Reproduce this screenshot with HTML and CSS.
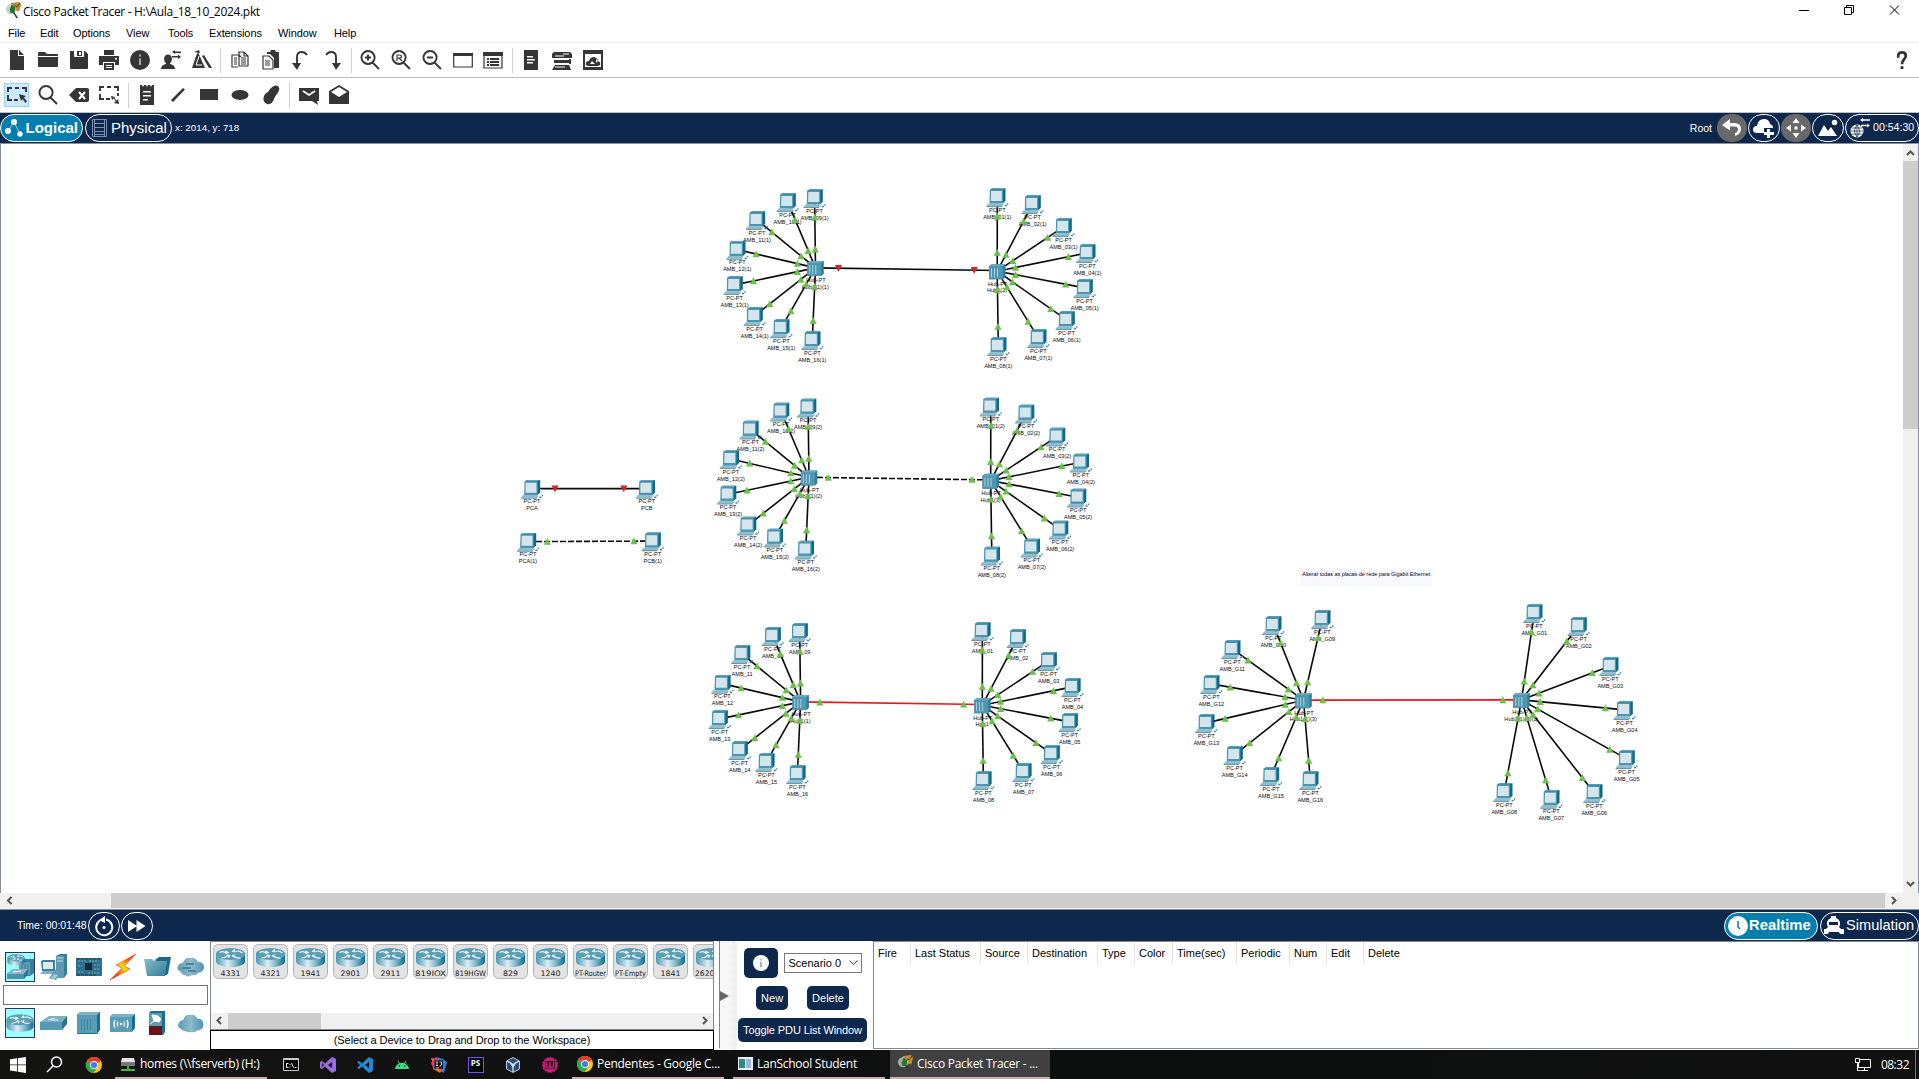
FILE: index.html
```html
<!DOCTYPE html>
<html lang="en">
<head>
<meta charset="utf-8">
<title>Cisco Packet Tracer</title>
<link rel="stylesheet" href="styles.css">
</head>
<body>
<svg class="defs" width="0" height="0">
  <defs>
    <linearGradient id="steel" x1="0" x2="1" y1="0" y2="0"><stop offset="0" stop-color="#4a97b1"/><stop offset=".4" stop-color="#dcecf2"/><stop offset=".6" stop-color="#9cc8d6"/><stop offset="1" stop-color="#0c6f8e"/></linearGradient>
    <linearGradient id="bolt" x1="0" x2="1" y1="1" y2="0"><stop offset="0" stop-color="#e8140c"/><stop offset=".25" stop-color="#f04a10"/><stop offset=".5" stop-color="#ffe000"/><stop offset=".75" stop-color="#f04a10"/><stop offset="1" stop-color="#e8140c"/></linearGradient>
    <linearGradient id="teal" x1="0" x2="1" y1="0" y2="1"><stop offset="0" stop-color="#8dbccd"/><stop offset="1" stop-color="#2d7c99"/></linearGradient>
    <linearGradient id="mist" x1="0" x2="1" y1="0" y2="0"><stop offset="0" stop-color="#5a9cb6"/><stop offset=".5" stop-color="#8fbccd"/><stop offset="1" stop-color="#4d94b0"/></linearGradient>
    <symbol id="router" viewBox="0 0 30 20">
      <path d="M.5 6.500v7c0 8 29 8 29 0v-7z" fill="url(#steel)"/>
      <ellipse cx="15" cy="6.500" rx="14.600" ry="6" fill="#5a9fb6"/>
      <path d="M4 5q4-2 7 1M27 5.500q-4-3-7-1.500M6 10.500q4 0 7-3M17 8q3 3 8 2.500" fill="none" stroke="#eef6f9" stroke-width="1.200"/>
      <path d="M10 3l4 2-4 2zM16 4l3-2.500 1 3.500zM13 11l-1-4 3 1zM20 7l-4 .500 2 2.500z" fill="#eef6f9"/>
    </symbol>
    <symbol id="chrome" viewBox="0 0 16 16">
      <circle cx="8" cy="8" r="8" fill="#fbc116"/>
      <path d="M8 8L1.070 4A8 8 0 0 1 14.930 4z" fill="#e33b2e"/><path d="M8 8L1.070 4A8 8 0 0 0 7.500 16L11.500 10z" fill="#2da94f"/>
      <circle cx="8" cy="8" r="3.900" fill="#fff"/><circle cx="8" cy="8" r="3.100" fill="#3b7ded"/>
    </symbol>
    <symbol id="tracer" viewBox="0 0 18 18">
      <path d="M6 1l9-1 2 3-2 7-8-2z" fill="#c98a2a"/><path d="M8 3l5 2 3-4" fill="none" stroke="#3b2a10"/>
      <circle cx="6.500" cy="7.500" r="5.500" fill="#b9c6c2" opacity=".8"/><path d="M7 3l4 2-1 6-4 1-1-4z" fill="#1c7a22"/><path d="M9 11l4 6" stroke="#333" stroke-width="1.600"/>
    </symbol>
  </defs>
</svg>

<header class="titlebar">
  <svg class="app-icon" width="17" height="17"><use href="#tracer"/></svg>
  <span class="title">Cisco Packet Tracer - H:\Aula_18_10_2024.pkt</span>
  <svg class="caption" width="110" height="12" viewBox="0 0 110 12" fill="none" stroke="#000"><path d="M1 6.500h10M46.500 3.500h7v7h-7zM48.500 3v-1.500h7v7h-1.500M92 1.500l9 9m0-9l-9 9"/></svg>
</header>

<nav class="menu">
  <span>File</span><span>Edit</span><span>Options</span><span>View</span><span>Tools</span><span>Extensions</span><span>Window</span><span>Help</span>
</nav>

<div class="toolbar top">
  <i><svg viewBox="0 0 20 20"><path d="M3 0h8v6h6v14H3zM12 0l5 5h-5z"/></svg></i>
  <i><svg viewBox="0 0 20 20"><path d="M0 3q0-1 1-1h6l2 2h10q1 0 1 1v1H0zM0 7h20v9q0 1-1 1H1q-1 0-1-1z"/></svg></i>
  <i><svg viewBox="0 0 20 20"><path fill-rule="evenodd" d="M1 1h4v6h10V1h1l3 3v14q0 1-1 1H2q-1 0-1-1zM8 1h5v5H8zm2 1v3h2V2z"/></svg></i>
  <i><svg viewBox="0 0 20 20"><path fill-rule="evenodd" d="M5 0h10v5H5zM0 6h20v9h-4v-3H4v3H0zM5 13h10v7H5zm2 2v1h6v-1zm0 2v1h6v-1zM16 8v1.500h2V8z"/></svg></i>
  <i><svg viewBox="0 0 20 20"><circle cx="10" cy="10" r="10"/><path d="M10 4.500v2M10 8.500V15" stroke="#aaa" stroke-width="2"/></svg></i>
  <i><svg viewBox="0 0 20 20"><ellipse cx="7" cy="9" rx="4" ry="4.500"/><path d="M0 19q0-4 5-5v-3h4v3q5 1 5 5zM11 2l3-2v1.500h6v1.500h-6V4zM20 7l-3-2.500V6h-6v1.500h6V9z"/></svg></i>
  <i><svg viewBox="0 0 20 20"><path d="M6 2l7 16H0L4 6zM10 6l2-1 8 13h-3zM2 2l5-2 1 3z"/><path d="M7 6l-3 9h6" fill="none" stroke="#fff"/></svg></i>
  <b></b>
  <i><svg viewBox="0 0 20 20" class="line"><path d="M8 17H2V5h7l2 2M8 2h6l4 4v10H9V2M14 2v4h4M4 8h3M4 10h3M4 12h3M4 14h3M11 8h5M11 10h5M11 12h5M11 14h5"/></svg></i>
  <i><svg viewBox="0 0 20 20"><path d="M6 2h3l1-2h4l1 2h3v16h-5V8L9 4H6z"/><path class="line" d="M2 6h6l4 4v9H2zM4 11h5M4 13h5M4 15h5"/></svg></i>
  <i><svg viewBox="0 0 20 20"><path class="line w2" d="M6 15V7Q6 2 11 2q3 0 5 3"/><path d="M1 13l5 7 4-7z"/></svg></i>
  <i><svg viewBox="0 0 20 20"><path class="line w2" d="M4 5q2-3 5-3 5 0 5 5v8"/><path d="M10 13l4 7 5-7z"/></svg></i>
  <b></b>
  <i><svg viewBox="0 0 20 20"><path class="line w2" d="M12 12l7 7M8 1a6.500 6.500 0 1 0 .1 0M5 7.500h6M8 4.500v6"/></svg></i>
  <i><svg viewBox="0 0 20 20"><path class="line w2" d="M12 12l7 7M8 1a6.500 6.500 0 1 0 .1 0"/><path class="line" stroke-width="1.500" d="M6 11V5h2q2.500 0 2.500 1.500T8 8H6m2 0l3 3"/></svg></i>
  <i><svg viewBox="0 0 20 20"><path class="line w2" d="M12 12l7 7M8 1a6.500 6.500 0 1 0 .1 0M5 7.500h6"/></svg></i>
  <i><svg viewBox="0 0 20 20"><path class="line" d="M.7 4h18.600v13H.7z"/><path d="M0 3h20v3H0z"/></svg></i>
  <i><svg viewBox="0 0 20 20"><path class="line" d="M1 3h18v15H1z"/><path d="M0 2h20v4H0zM4 8h2v2H4zM7 8h9v2H7zM4 11h2v2H4zM7 11h9v2H7zM4 14h2v2H4zM7 14h9v2H7z"/></svg></i>
  <b></b>
  <i><svg viewBox="0 0 20 20"><path fill-rule="evenodd" d="M3 0h14v20H3zM6 6v1.500h6V6zm0 3v1.500h8V9zm0 3v1.500h6V12z"/></svg></i>
  <i><svg viewBox="0 0 20 20"><path d="M2 2h16l2 2v4H0V4zM2 10h15v3H2zM3 15h14l2 5H0zM17 9h2v5h-2z"/><path d="M3 6h9M3 17h10M11 4h6" stroke="#fff"/></svg></i>
  <i><svg viewBox="0 0 20 20"><path fill-rule="evenodd" d="M0 0h20v20H0zM2 4v13h16V4z"/><path fill-rule="evenodd" d="M6 16q-4 0-3-3 0-2 3-2 1-4 5-4 4 1 4 4 3 1 2 4l-2 1zM7 14h5l-3-3zm6-5v4l2-2z"/></svg></i>
  <svg class="help" viewBox="0 0 12 20"><path d="M2 7V5q0-3.500 4-3.500T10 5q0 2-2 4t-2 5" fill="none" stroke="#333" stroke-width="2.800"/><path d="M4.500 16h3v3h-3z"/></svg>
</div>

<div class="toolbar">
  <i class="on"><svg viewBox="0 0 20 20"><path class="line w2" d="M1 7V3h4M8 3h4M15 3h4v4M1 10v5h4M7 15h4"/><path d="M12 9l7 2-2 1.500 3 4-1.500 1.500-3-4-1.500 2z"/></svg></i>
  <i><svg viewBox="0 0 20 20"><path class="line w2" d="M12 12l7 7M8 1a6.500 6.500 0 1 0 .1 0"/></svg></i>
  <i><svg viewBox="0 0 20 20"><path d="M7 3h11q2 0 2 2v10q0 2-2 2H7l-7-7z"/><path d="M10 7l6 7m0-7l-6 7" stroke="#fff" stroke-width="2"/></svg></i>
  <i><svg viewBox="0 0 20 20"><path class="line w2" d="M1 6V2h4M8 2h4M15 2h4v4M19 8v3M1 9v5h4M7 14h4"/><path class="line" d="M14 12l4 5"/><path d="M12 11l4 1-3 3zM20 19l-5-1 4-4z"/></svg></i>
  <b></b>
  <i><svg viewBox="0 0 20 20"><path fill-rule="evenodd" d="M3 0h2l1 2 1-2h2l1 2 1-2h2l1 2 1-2h2v20H3zM6 6v1.500h8V6zm0 4v1.500h8V10zm0 4v1.500h5V14z"/></svg></i>
  <i><svg viewBox="0 0 20 20"><path d="M3 15L15 3l2 1.500L5 17z"/></svg></i>
  <i><svg viewBox="0 0 20 20"><path d="M1 4h18v11H1z"/></svg></i>
  <i><svg viewBox="0 0 20 20"><ellipse cx="10" cy="10" rx="8.500" ry="5"/></svg></i>
  <i><svg viewBox="0 0 20 20"><path d="M9 4q4-5 8-3 3 3-1 8-2 2-3 5-2 6-7 5-5-2-3-8 1-3 4-4z"/></svg></i>
  <b></b>
  <i><svg viewBox="0 0 20 20"><path d="M0 3h20v13h-2l1 4-6-4H0z"/><path d="M4 6l6 4 6-4" fill="none" stroke="#fff" stroke-width="1.700"/></svg></i>
  <i><svg viewBox="0 0 20 20"><path d="M0 6l10-6 10 6v13H0z"/><path d="M2 7l8-5 8 5-8 5z" fill="#fff"/></svg></i>
</div>

<div class="bar nav">
  <span class="pill active logical"><svg width="20" height="20" viewBox="0 0 20 20" fill="#fff"><circle cx="4" cy="13" r="3"/><circle cx="10" cy="4" r="3"/><circle cx="16" cy="16" r="2.700"/><path d="M4 13l6-9 6 12" fill="none" stroke="#fff" stroke-width=".6"/></svg>Logical</span>
  <span class="pill physical"><svg width="15" height="20" viewBox="0 0 15 20" fill="none" stroke="#7d8fae"><path d="M.5 1.500h14v17H.5zM3 5.500h9M3 9.500h9M3 13.500h9M3 16.500h9M2.500 1v18M12.500 1v18"/></svg>Physical</span>
  <span class="coords">x: 2014, y: 718</span>
  <span class="root">Root</span>
  <span class="round grey"><svg width="22" height="20" viewBox="0 0 22 20"><path d="M1 7l8-6v4h4q7 0 7 6 0 5-6 7v-3q3-1 3-4 0-2.500-4-2.500H9v4z" fill="#fff"/></svg></span>
  <span class="round"><svg width="22" height="20" viewBox="0 0 22 20" fill="#fff"><path d="M4 15q-4 0-4-3.500T4 8q1-7 7-7 5 0 6 5 3 1 3 4H11v5z"/><path d="M14 11h3v3h4v3h-4v3h-3v-3h-3v-3h3z"/></svg></span>
  <span class="round grey"><svg width="20" height="20" viewBox="0 0 20 20" fill="#fff"><path d="M10 0l3.500 5h-7zM10 20l3.500-5h-7zM0 10l5-3.500v7zM20 10l-5-3.500v7zM8.500 8.500h3v3h-3z"/></svg></span>
  <span class="round"><svg width="20" height="18" viewBox="0 0 20 18" fill="#fff"><path d="M0 17L6 6l4 6 3-4 6 9z"/><circle cx="16.500" cy="3.500" r="2.700"/></svg></span>
  <span class="pill clock"><svg width="20" height="20" viewBox="0 0 20 20"><circle cx="7" cy="13" r="6.500" fill="#fff"/><path d="M7 7v12M1 13h12M2 10h10M2 16h10M7 7q-5 6 0 12M7 7q5 6 0 12" fill="none" stroke="#0e274c" stroke-width=".7"/><path d="M10 2l3-2v1.300h7v1.400h-7V4zM20 7.500l-3-2v1.300h-6v1.400h6v1.300z" fill="#fff"/></svg>00:54:30</span>
</div>

<main class="workspace">
  <svg id="topology" width="1903" height="749" viewBox="0 144 1903 749"></svg>
  <div class="vscroll"><svg width="15" height="16" viewBox="0 0 15 16"><path d="M4 10l3.500-3.500L11 10"/></svg><span></span><svg width="15" height="16" viewBox="0 0 15 16"><path d="M4 5l3.500 3.500L11 5"/></svg></div>
  <div class="hscroll"><svg width="16" height="15" viewBox="0 0 16 15"><path d="M10.500 4L7 7.500 10.500 11"/></svg><span></span><svg width="16" height="15" viewBox="0 0 16 15"><path d="M7 4l3.500 3.500L7 11"/></svg></div>
</main>

<div class="bar time">
  <span class="elapsed">Time: 00:01:48</span>
  <span class="round"><svg width="20" height="22" viewBox="0 0 20 22"><path d="M6 5.500a8 8 0 1 0 6-1" fill="none" stroke="#fff" stroke-width="2"/><path d="M5 5l6-4v7z" fill="#fff"/><circle cx="10" cy="12.500" r="1.500" fill="#fff"/></svg></span>
  <span class="round"><svg width="18" height="14" viewBox="0 0 18 14"><path d="M0 1l9 6-9 6zM8.500 1l9 6-9 6z" fill="#fff"/></svg></span>
  <span class="pill active realtime"><svg width="20" height="20" viewBox="0 0 20 20"><circle cx="10" cy="10" r="10" fill="#fff"/><path d="M10 5v6l2 2" fill="none" stroke="#0a76a8" stroke-width="1.500"/></svg>Realtime</span>
  <span class="pill simulation"><svg width="20" height="19" viewBox="0 0 20 19"><path d="M0 13h2l2-2-1-2V6q1-3 4-4V0h5v2q3 1 4 4v3l-1 2 2 2h3v5h-4l-1-2H5l-1 2H0z" fill="#fff"/><path d="M5 6h9v3H5z" fill="#0e274c"/></svg>Simulation</span>
</div>

<section class="bottom">
  <div class="categories">
    <div class="cats">
      <i class="sel"><svg width="28" height="28" viewBox="0 0 28 28"><path d="M13 9l3-3h12v14l-4 3H13z" fill="#3a7f9a"/><path d="M13 9h11v13H13z" fill="#5f9eb6"/><path d="M16 11v6M19 11v6M22 11v9" stroke="#3a7f9a"/><svg x="1" y="1" width="18" height="12"><use href="#router"/></svg><path d="M1 21l6-5h15l-4 5v5H1z" fill="#4d93ae"/><path d="M1 21l6-5h15l-4 5z" fill="#86b6c8"/><path d="M22 16v5l-4 5v-5z" fill="#2d6f8a"/><path d="M7 19l8-1" stroke="#fff"/></svg></i>
      <i><svg width="28" height="28" viewBox="0 0 28 28"><path d="M16 3l4-2h7v20l-3 4h-8z" fill="#3a7f9a"/><path d="M16 3h8v22h-8z" fill="#5b9ab2"/><path d="M17 5h6M17 8h6" stroke="#cde"/><path d="M1 8l2-1h12v11H2z" fill="#3c7f99"/><path d="M3 9h10v7H3z" fill="#dceaf0"/><path d="M0 21l3-3h12l-1 3z" fill="#7eb0c2"/><path d="M9 25l7-9 5 4-5 7z" fill="#5f9cb3"/><path d="M11 25l3-4 4 1-3 4z" fill="#a9cbd8"/></svg></i>
      <i><svg width="26" height="20" viewBox="0 0 26 20"><path d="M0 1h26v18H0z" fill="#2e6f8c"/><path d="M9 6h7v7H9z" fill="#172a35"/><path d="M2 4h8M13 4h10M18 8h6M18 12h6M2 15h5M2 9h4M12 16h11" stroke="#79a9ba" stroke-width="1.200" stroke-dasharray="2 1"/><path d="M1 2h24M1 18h20" stroke="#1b3d4e" stroke-width="1.200" stroke-dasharray="3 1"/></svg></i>
      <i><svg width="28" height="28" viewBox="0 0 28 28"><path d="M27 1L7 12l6 3L1 27l20-11-6-3z" fill="url(#bolt)" stroke="#e9452e" stroke-width=".6"/></svg></i>
      <i><svg width="27" height="20" viewBox="0 0 27 20"><path d="M11 3l4-3h12l-3 17-4 2z" fill="#1b6a88"/><path d="M0 2h8l2 2h13l-2 15H3z" fill="url(#teal)"/></svg></i>
      <i><svg width="28" height="20" viewBox="0 0 28 20"><path d="M4 15q-5-2-3-6 1-3 5-3 2-6 8-5 4-1 7 4 6 0 6 5t-6 6q-2 3-6 2-4 3-7 0-3 0-4-3z" fill="url(#mist)"/><path d="M9 7h8M5 11h9M11 14h8" stroke="#38738d" stroke-width="1.500"/></svg></i>
    </div>
    <div class="search"></div>
    <div class="cats">
      <i class="sel"><svg width="28" height="20"><use href="#router"/></svg></i>
      <i><svg width="28" height="16" viewBox="0 0 28 16"><path d="M0 7l9-6h18l-5 6z" fill="#7eb0c4"/><path d="M0 7h22v8H0z" fill="#559bb5"/><path d="M27 1v8l-5 6V7z" fill="#2c6f8a"/><path d="M8 5l7-2m-4 2l7 0" stroke="#fff" stroke-width=".8"/></svg></i>
      <i><svg width="24" height="22" viewBox="0 0 24 22"><path d="M0 3l3-3h20v18l-3 4H0z" fill="#16708e"/><path d="M0 3l3-3h20l-3 3z" fill="#7fb2c5"/><path d="M0 3h20v18H0z" fill="#5a9cb6"/><path d="M4.500 7v11M7.500 7v11M10.500 7v11M13.500 7v11" stroke="#3b7d98" stroke-width=".8"/></svg></i>
      <i><svg width="26" height="18" viewBox="0 0 26 18"><path d="M0 3l3-3h22v14l-3 4H0z" fill="#16708e"/><path d="M0 3l3-3h22l-3 3z" fill="#7fb2c5"/><path d="M0 3h22v15H0z" fill="#5a9cb5"/><path d="M5 6q-2 4 0 8M8 7.500q-1.500 2.500 0 5M17 6q2 4 0 8M14 7.500q1.500 2.500 0 5" fill="none" stroke="#fff" stroke-width="1.300"/><circle cx="11" cy="10" r="1.300" fill="#fff"/></svg></i>
      <i><svg width="16" height="24" viewBox="0 0 16 24"><path d="M0 2l2-2h14v21l-2 3H0z" fill="#16708e"/><path d="M0 2h13v13H0z" fill="#5a9cb5"/><path d="M0 15h13v9H0z" fill="#6b1117"/><path d="M3 4l6 1 3 3-2 3-5-1zM1 13l4-3" fill="#fff" stroke="#fff"/></svg></i>
      <i><svg width="28" height="19" viewBox="0 0 28 20"><path d="M4 16q-5-2-3-6 1-3 5-4 2-6 8-5 4-1 7 4 6 0 6 6t-6 6q-3 3-7 2-4 1-6-1-3 0-4-2z" fill="url(#mist)"/></svg></i>
    </div>
  </div>

  <div class="devices">
    <div class="tiles" id="tiles"></div>
    <div class="dscroll"><svg width="17" height="15" viewBox="0 0 17 15"><path d="M10 4L6.500 7.500 10 11"/></svg><span></span><svg width="17" height="15" viewBox="0 0 17 15"><path d="M7 4l3.500 3.500L7 11"/></svg></div>
    <div class="hint">(Select a Device to Drag and Drop to the Workspace)</div>
  </div>

  <div class="splitter"><svg width="9" height="10"><path d="M0 0l9 5-9 5z" fill="#666"/></svg></div>

  <div class="scenario">
    <div class="row"><span class="btn info"><svg width="16" height="16" viewBox="0 0 16 16"><circle cx="8" cy="8" r="8" fill="#fff"/><path d="M8 4v1.500M8 7v5" stroke="#8a97ad" stroke-width="1.500"/></svg></span><span class="combo">Scenario 0<svg width="9" height="6" viewBox="0 0 9 6"><path d="M.5.5l4 4 4-4" fill="none" stroke="#444"/></svg></span></div>
    <div class="row mid"><span class="btn">New</span><span class="btn">Delete</span></div>
    <div class="row"><span class="btn toggle">Toggle PDU List Window</span></div>
  </div>

  <div class="pdu">
    <span style="width:37px">Fire</span><span style="width:70px">Last Status</span><span style="width:47px">Source</span><span style="width:70px">Destination</span><span style="width:37px">Type</span><span style="width:38px">Color</span><span style="width:64px">Time(sec)</span><span style="width:53px">Periodic</span><span style="width:37px">Num</span><span style="width:37px">Edit</span><span>Delete</span>
  </div>
</section>

<footer class="taskbar">
  <i class="start"><svg width="16" height="16" viewBox="0 0 16 16" fill="#fff"><path d="M0 2.300L7 1.300v6.200H0zM7.800 1.200L16 0v7.500H7.800zM0 8.300h7v6.200l-7-1zM7.800 8.300H16V16l-8.200-1.200z"/></svg></i>
  <i><svg width="17" height="17" viewBox="0 0 17 17" fill="none" stroke="#fff" stroke-width="1.500"><circle cx="10.500" cy="6" r="5"/><path d="M7 10l-6 6"/></svg></i>
  <i class="c3"><svg width="16" height="16"><use href="#chrome"/></svg></i>
  <span class="task homes"><svg width="16" height="16" viewBox="0 0 16 16"><path d="M2 2h12l1 4H1z" fill="#e4e4e4"/><path d="M1 6h14v4H1z" fill="#777"/><path d="M7 10h2v3h6v2H1v-2h6z" fill="#3fb54a"/></svg><em>homes (\\fserverb) (H:)</em></span>
  <i><svg width="16" height="13" viewBox="0 0 16 13"><path d="M.5.5h15v12H.5z" fill="#000" stroke="#ccc"/><path d="M1 1.500h14" stroke="#ccc"/><path d="M5.500 5.500h-2v4h2M7 6v1M7 8.500v1M8.500 5l2 4.500M11.500 9.500h2" stroke="#fff" fill="none"/></svg></i>
  <i><svg width="16" height="16" viewBox="0 0 16 16"><path d="M12 0l4 2v12l-4 2-7-6.500L2 12l-2-1V5l2-1 3 2.500zM12 5L8 8l4 3zM2 6v4l2-2z" fill="#9c6be0" fill-rule="evenodd"/></svg></i>
  <i><svg width="16" height="16" viewBox="0 0 16 16"><path d="M12 0l4 2v12l-4 2-7-6.500L2 12l-2-1 3-3-3-3 2-1 3 2.500zM12 5L8 8l4 3z" fill="#1f8ad2" fill-rule="evenodd"/></svg></i>
  <i><svg width="16" height="16" viewBox="0 0 16 16"><path d="M1 12q.5-4 4-5.500L3.500 4l.7-.4 1.500 2.500q2.300-.8 4.600 0l1.500-2.500.7.400L11 6.500q3.500 1.500 4 5.500z" fill="#3ddc84"/><path d="M4.500 9h1.500M10 9h1.500" stroke="#111"/></svg></i>
  <i><svg width="16" height="16" viewBox="0 0 16 16"><path d="M0 1l6 1-2 11z" fill="#f0672b"/><path d="M5 0l7 2 4 3-3 11-8-4z" fill="#2b7de0"/><path d="M0 6l5-6 3 4-5 9z" fill="#e4366b"/><path d="M2 12l2-8 8 8-3 4z" fill="#f0672b"/><path d="M3.500 3.500h8.500v8.500H3.500z" fill="#0a0a0a"/><path d="M5 5h2M6 5v4M5 8.500h2M8.500 5h2v3l-2 1M5 11h3" stroke="#fff" fill="none" stroke-width=".8"/></svg></i>
  <i><span class="ps">PS</span></i>
  <i><svg width="14" height="16" viewBox="0 0 14 16"><path d="M7 .5L13.500 4v8L7 15.500.500 12V4z" fill="#294b76" stroke="#b8c8dc"/><path d="M1 4l6 3.500L13 4M7 8v7M4 5l3 5 3-5" fill="none" stroke="#dce6f2" stroke-width="1.300"/></svg></i>
  <i><svg width="16" height="16" viewBox="0 0 16 16"><circle cx="8" cy="8" r="7.200" fill="#d01b7c" stroke="#d01b7c" stroke-width="1.500" stroke-dasharray="2 1"/><path d="M3 4h10v8H3z" fill="#161616"/><path d="M4.500 5v4q0 2 1.800 2T8 9V5v4q0 2 1.800 2t1.700-2V5" fill="none" stroke="#e01b84" stroke-width="1.500"/></svg></i>
  <span class="task pend"><svg width="16" height="16"><use href="#chrome"/></svg><em>Pendentes - Google C...</em></span>
  <span class="task lan"><svg width="15" height="13" viewBox="0 0 15 13"><path d="M0 0h15v13H0z" fill="#e8eef2"/><path d="M1 2h6v9H1z" fill="#2b8a83"/><path d="M8 2h5v9H8z" fill="#9fb4cf"/></svg><em>LanSchool Student</em></span>
  <span class="task cisco"><svg width="17" height="17"><use href="#tracer"/></svg><em>Cisco Packet Tracer - ...</em></span>
  <svg class="net" width="16" height="14" viewBox="0 0 16 14" fill="none" stroke="#fff"><path d="M5 1.500h10.500v8H3.500V5M.5.500h4v4h-4zM9.500 10v3M6 12.500h7M2.500 5v7.500h3"/></svg>
  <em class="now">08:32</em>
  <span class="peek"></span>
</footer>
<script src="topology.js"></script>
</body>
</html>
```
FILE: styles.css
```css
* { box-sizing: border-box; }
body { margin: 0; width: 1919px; height: 1079px; overflow: hidden; display: flex; flex-direction: column; background: #fff; color: #000; font: 11px "Liberation Sans", Arial, sans-serif; white-space: nowrap; }
svg { display: block; flex: none; }
i, em { font-style: normal; }
.defs { position: absolute; }

.titlebar { height: 23px; flex: none; display: flex; align-items: center; padding: 0 11px 0 5px; }
.app-icon { margin-top: -2px; }
.title { margin-left: 1px; font: 12px "Open Sans", sans-serif; letter-spacing: -.32px; flex: 1; }
.caption { margin-top: -3px; }

.menu { height: 20px; flex: none; display: grid; grid-template-columns: 32px 33px 53px 42px 41px 69px 56px 40px; align-items: center; padding-left: 8px; border-bottom: 1px solid #f0f0f0; letter-spacing: -.1px; }

.toolbar { height: 35px; flex: none; display: flex; align-items: center; padding-left: 1.6px; border-bottom: 1px solid #bfbfbf; }
.toolbar i { width: 30.8px; height: 24px; display: flex; align-items: center; justify-content: center; }
.toolbar i svg { width: 20px; height: 20px; fill: #363639; }
.toolbar b { width: 7.2px; height: 25px; background: linear-gradient(#d0d0d0, #d0d0d0) center / 1px 100% no-repeat; }
.toolbar .line { fill: none; stroke: #363639; stroke-width: 1.2; }
.toolbar .w2 { stroke-width: 1.9; }
.toolbar i.on { width: 25px; margin: 0 2.9px; background: #cce8ff; border: 1px solid #99d1ff; }
.toolbar .help { width: 12px; height: 19px; margin: 0 11px 0 auto; fill: #333; }

.bar { height: 31px; flex: none; display: flex; align-items: center; background: #0e274c; color: #fff; font-size: 10.5px; border-bottom: 1px solid #8a919c; }
.pill { height: 28px; border: 1px solid #fff; border-radius: 14px; display: flex; align-items: center; font-size: 15px; padding-bottom: 2px; }
.pill svg { margin-top: 2px; }
.pill.active { background: #037eaf; font-weight: bold; }
.logical { width: 83px; padding-left: 3px; gap: 1.5px; }
.physical { width: 87px; margin-left: 2px; padding-left: 6px; gap: 4px; }
.coords { margin-left: 3px; font-size: 9.8px; padding-bottom: 2px; }
.root { margin: 0 5px 0 auto; padding-bottom: 1px; }
.round { width: 32px; height: 28px; border: 1px solid #fff; border-radius: 14px; display: flex; align-items: center; justify-content: center; margin-right: 1px; }
.round.grey { width: 30px; border: 0; background: #696969; }
.clock { width: 74px; font-size: 10.6px; padding-left: 4px; gap: 3px; }

.workspace { height: 766px; flex: none; display: grid; grid-template: 749px 16px / 1903px 16px; border-bottom: 1px solid #8a919c; }
.vscroll, .hscroll, .dscroll { background: #f0f0f0; display: flex; }
.vscroll { flex-direction: column; border-right: 1px solid #8a919c; padding-top: 1px; }
.vscroll svg path, .hscroll svg path, .dscroll svg path { fill: none; stroke: #555; stroke-width: 2; }
.vscroll span { height: 268px; background: #cdcdcd; margin-bottom: auto; }
.hscroll { grid-column: 1 / 3; padding: 0 18px 1px 1px; }
.hscroll span { width: 1774px; margin-left: 94px; background: #cdcdcd; }

.bar.time { border: 0; }
.elapsed { margin: 0 1px 0 17px; width: 70px; padding-bottom: 1px; }
.realtime { width: 94px; margin-left: auto; padding-left: 3px; gap: 1px; font-size: 14.8px; }
.simulation { width: 99px; margin-left: 2px; padding-left: 3px; gap: 2px; font-size: 14.6px; }

.bottom { height: 109px; flex: none; display: flex; }
.categories { width: 210px; display: flex; flex-direction: column; padding: 11px 2px 0 3px; }
.cats { display: flex; padding-left: 2px; gap: 4.3px; height: 30px; }
.cats i { width: 30px; height: 30px; display: flex; align-items: center; justify-content: center; }
.cats .sel { background: #99ffff; border: 1px solid #335; }
.search { height: 20px; margin: 3px 0; border: 1px solid #767676; }

.devices { width: 504px; display: flex; flex-direction: column; overflow: hidden; }
.tiles { height: 72px; display: flex; gap: 5px; padding: 2px 0 0 2px; overflow: hidden; border: 1px solid #828790; border-bottom: 0; }
.tiles svg { overflow: visible; }
.tiles text { font-family: "DejaVu Sans", sans-serif; font-size: 7.6px; fill: #222; }
.dscroll { height: 17px; border: 1px solid #828790; border-top: 0; }
.dscroll span { width: 93px; background: #cdcdcd; margin-right: auto; }
.hint { height: 20px; border: 1px solid #000; text-align: center; line-height: 18px; letter-spacing: -.06px; }

.splitter { width: 23px; padding-left: 5px; display: flex; align-items: center; background: linear-gradient(#fff, #fff) 0 0 / 5px 100% no-repeat, linear-gradient(#828282, #828282) 5px 0 / 1px 107px no-repeat, linear-gradient(#f0f0f0, #f0f0f0) 18px 0 / 5px 100% no-repeat, repeating-conic-gradient(#f1f1f1 0 25%, #fff 0 50%) 0 0 / 2px 2px; }
.splitter svg { margin-left: 1px; }

.scenario { width: 136px; display: flex; flex-direction: column; align-items: center; padding: 7px 5px 0 0; }
.row { display: flex; align-items: center; gap: 6px; }
.mid { gap: 19px; margin: 8px 0; }
.btn { height: 24px; border-radius: 5px; background: #0e274c; color: #fff; display: flex; align-items: center; padding: 0 5px; }
.btn.toggle { letter-spacing: -.1px; }
.btn.info { width: 34px; height: 30px; justify-content: center; }
.combo { width: 78px; height: 20px; border: 1px solid #7a7a7a; display: flex; align-items: center; justify-content: space-between; padding: 0 3px 0 4px; }

.pdu { flex: 1; border: 1px solid #828790; display: flex; height: 108px; }
.pdu span { height: 22px; line-height: 22px; padding-left: 4px; border-right: 1px solid #e5e5e5; }
.pdu span:last-child { border: 0; }

.taskbar { flex: 1; display: flex; align-items: center; background: linear-gradient(90deg, #141413, #0c0e0d 60%, #101110); color: #fff; }
.taskbar i { width: 37px; display: flex; justify-content: center; }
.taskbar .start { width: 36px; }
.taskbar .c3 { width: 41px; margin-right: 1px; }
.taskbar em { font: 12px "Open Sans", sans-serif; letter-spacing: -.27px; }
.task { height: 100%; display: flex; align-items: center; gap: 4px; padding-left: 5px; border-bottom: 2px solid #c8b2ad; }
.homes { width: 152px; margin-right: 5px; }
.pend { width: 152px; margin: 0 9px 0 4px; }
.lan { width: 152px; margin-right: 5px; }
.cisco { width: 160px; background: #3f403f; padding-left: 7px; gap: 3px; }
.ps { width: 16px; height: 16px; border: 1px solid #6b57ff; background: #000; font: bold 8px/10px "Open Sans", sans-serif; text-align: center; }
.net { margin-left: auto; }
.taskbar .now { margin: 0 6px 0 10px; letter-spacing: -.5px; }
.peek { width: 4px; height: 100%; border-left: 1px solid #777; }

.cable { stroke: #0a0a0a; stroke-width: 1.6; fill: none; }
.cable.dash { stroke-dasharray: 6 2; }
.cable.red { stroke: #f51414; stroke-width: 1.7; }
.label { font-size: 5.6px; text-anchor: middle; fill: #0c0c14; }
```
FILE: topology.js
```js
const NS = 'http://www.w3.org/2000/svg';
const stage = document.getElementById('topology');
const layers = { cables: '', nodes: '', labels: '', lights: '' };

function pc(x, y, name) {
  layers.nodes += `<g transform="translate(${x} ${y})">
    <path d="M1.500 1.200L3.500 0h13v12.500L14 15H1z" fill="#0b6c8a"/>
    <path d="M.800 1.200L3 0h13.500L14 1.200z" fill="#5fa3ba"/>
    <path d="M.800 1.200H14V15H.500z" fill="#4a95b0"/>
    <path d="M2 2.700h10.800v10H1.800z" fill="#d5e5ec"/>
    <path d="M-.500 15H14l-1.300 2.600H-2.700z" fill="#93bccb"/>
    <path d="M-2.700 17.600h15.400L14 15v1.500l-1.300 2.200H-2.700z" fill="#5c9bb2"/>
    <path d="M15.600 17.300h2.200M18 15.600h1.300" stroke="#3b87a2" stroke-width="1.500"/></g>`;
  layers.labels += `<text class="label" x="${x + 8.300}" y="${y + 23.200}">PC-PT</text><text class="label" x="${x + 8.300}" y="${y + 30.200}">${name}</text>`;
  return [x + 8.300, y + 8.600];
}

function hub(x, y, name) {
  layers.nodes += `<g transform="translate(${x} ${y})">
    <path d="M0 2L2.500 0h14v13L14 15H0z" fill="#2f7f9b"/>
    <path d="M0 2h14v13H0z" fill="#4f97b1"/><path d="M0 2L2.500 0h14L14 2z" fill="#6ba9c0"/>
    <path d="M2.500 4v9M5.500 4v9M8.500 4v9" stroke="#b9d6e1" stroke-width=".9"/></g>`;
  layers.labels += `<text class="label" x="${x + 8.700}" y="${y + 21.200}">Hub-PT</text><text class="label" x="${x + 8}" y="${y + 28}">${name}</text>`;
  return [x + 8.200, y + 6.900];
}

function light(from, to, distance, up) {
  const len = Math.hypot(to[0] - from[0], to[1] - from[1]);
  const x = from[0] + (to[0] - from[0]) * distance / len;
  const y = from[1] + (to[1] - from[1]) * distance / len;
  const d = up ? 'M-3.600 3.200h7.200L0-3.600z' : 'M-3.600-3.200h7.200L0 3.600z';
  layers.lights += `<path transform="translate(${x} ${y})" d="${d}" fill="${up ? '#6cc04a' : '#d2232f'}"/>`;
}

function link(a, b, kind = '', up = true) {
  layers.cables += `<path class="cable ${kind}" d="M${a}L${b}"/>`;
  light(a, b, up ? 19.300 : 23, up);
  light(b, a, up ? 18.700 : 23, up);
}

const left = [['09', 806.3, 189.3], ['10', 779.3, 193.3], ['11', 748.7, 211.3], ['12', 729, 241], ['13', 726.3, 276.3], ['14', 746.3, 307.3], ['15', 773, 319.3], ['16', 804, 331.3]];
const right = [['01', 989, 188.3], ['02', 1024.3, 195.3], ['03', 1055.3, 218.3], ['04', 1079, 244.3], ['05', 1076.3, 279.3], ['06', 1058.3, 311.3], ['07', 1030, 329.3], ['08', 990, 337.3]];
const gigaLeft = [['09', 1314, 610.3], ['10', 1265, 616.3], ['11', 1224, 640.3], ['12', 1203, 675.3], ['13', 1198, 714.3], ['14', 1226.3, 746.3], ['15', 1262.7, 767.3], ['16', 1302, 771.3]];
const gigaRight = [['01', 1526, 604.3], ['02', 1570.3, 617.3], ['03', 1602, 657.3], ['04', 1616.3, 701.3], ['05', 1618.3, 750.3], ['06', 1586, 784.3], ['07', 1543, 790], ['08', 1496, 783.3]];

function star(list, hubX, hubY, hubName, prefix, suffix, dx, dy) {
  const centre = hub(hubX + dx, hubY + dy, hubName);
  list.forEach(([n, x, y]) => link(pc(x + dx, y + dy, prefix + n + suffix), centre));
  return centre;
}

function pair(dx, dy, suffix, names, kind, up) {
  const a = star(left, 807.3, 261, names[0], 'AMB_', suffix, dx, dy);
  const b = star(right, 989, 264.3, names[1], 'AMB_', suffix, dx, dy);
  link(a, [b[0], b[1] - 0.7], kind, up);
}

pair(0, 0, '(1)', ['Hub1(1)(1)', 'Hub1(2)'], '', false);
pair(-6.5, 209.4, '(2)', ['Hub1(1)(2)', 'Hub1(3)'], 'dash', true);
pair(-14.9, 434, '', ['Hub1(1)', 'Hub1'], 'red', true);
link(star(gigaLeft, 1295.3, 693.3, 'Hub1(1)(3)', 'AMB_G', '', 0, 0),
     star(gigaRight, 1513.3, 693, 'Hub1(1)(3)(1)', 'AMB_G', '', 0, 0), 'red', true);
link(pc(523.7, 480, 'PCA'), pc(638.5, 480, 'PCB'), '', false);
link(pc(519.7, 533, 'PCA(1)'), pc(644.4, 532.5, 'PCB(1)'), 'dash', true);

stage.innerHTML = `<path d="M.5 144v749" stroke="#8a919c"/>
  <path d="M1300.700 568h132v18h-132z" fill="#f8f8ff"/>
  <text x="1302.300" y="576" font-size="5.600" textLength="128" fill="#0c0c14">Alterar todas as placas de rede para Gigabit Ethernet</text>`
  + layers.cables + layers.nodes + layers.labels + layers.lights;

const models = ['4331', '4321', '1941', '2901', '2911', '819IOX', '819HGW', '829', '1240', 'PT-Router', 'PT-Empty', '1841', '2620XM'];
document.getElementById('tiles').innerHTML = models.map(m => {
  const w = m.length > 4 ? 31 : m.length * 5;
  return `<svg width="35" height="35" viewBox="0 0 35 35"><rect x=".5" y=".5" width="34" height="34" rx="5" fill="#e3e3e3" stroke="#b4b4b4"/>
    <svg x="2.500" y="3.500" width="30" height="20"><use href="#router"/></svg>
    <text x="${(35 - w) / 2}" y="31.500" textLength="${w}" lengthAdjust="spacingAndGlyphs">${m}</text></svg>`;
}).join('');
```
